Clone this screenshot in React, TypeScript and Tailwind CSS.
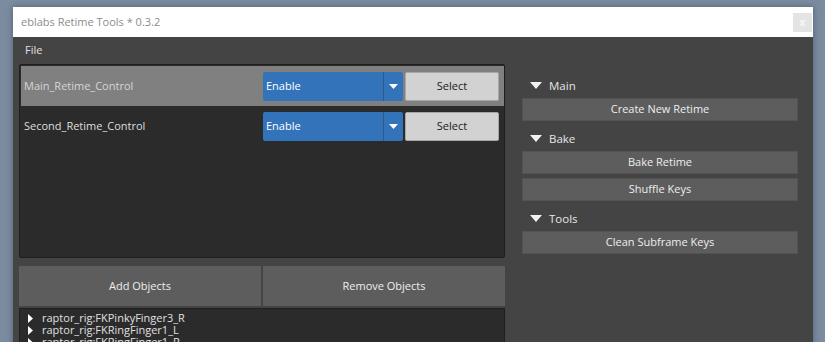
const font = { fontFamily: '"Open Sans", "Liberation Sans", sans-serif' };

const rows = [
  { name: "Main_Retime_Control", active: true },
  { name: "Second_Retime_Control", active: false },
];

const treeItems = [
  "raptor_rig:FKPinkyFinger3_R",
  "raptor_rig:FKRingFinger1_L",
  "raptor_rig:FKRingFinger1_R",
];

const Triangle = () => (
  <svg width="12" height="8" viewBox="0 0 12 8" className="shrink-0">
    <path d="M0 0 L12 0 L6 7 Z" fill="#f2f2f2" />
  </svg>
);

const SectionHeader = ({ title, first }: { title: string; first?: boolean }) => (
  <div className={`flex h-[24px] shrink-0 items-center gap-[7px] pl-[8px] ${first ? "" : "mt-[6px]"}`}>
    <Triangle />
    <span className="text-[11.5px] text-[#e6e6e6]">{title}</span>
  </div>
);

const ToolButton = ({ label, top }: { label: string; top?: boolean }) => (
  <button
    className={`flex h-[23px] w-full shrink-0 items-center justify-center border border-[#535353] bg-[#5d5d5d] text-[11px] text-[#eeeeee] ${top ? "mt-[4px]" : ""}`}
  >
    {label}
  </button>
);

const RetimeRow = ({ name, active }: { name: string; active: boolean }) => (
  <div className={`flex h-[40px] shrink-0 items-center pl-[3px] pr-[5px] ${active ? "bg-[#808080]" : ""}`}>
    <span className={`flex-1 text-[11px] ${active ? "text-[#d6d6d6]" : "text-[#dedede]"}`}>{name}</span>
    <div className="flex h-[29px] w-[140px] items-stretch rounded-[2px] bg-[#3273ba]">
      <span className="flex flex-1 items-center pl-[3px] text-[11px] text-white">Enable</span>
      <div className="w-[1px] bg-[#2a5b91]" />
      <div className="flex w-[19px] items-center justify-center">
        <svg width="9" height="5" viewBox="0 0 9 5">
          <path d="M0 0 L9 0 L4.5 5 Z" fill="#ffffff" />
        </svg>
      </div>
    </div>
    <button className="ml-[2px] flex h-[29px] w-[94px] items-center justify-center rounded-[2px] border border-[#a8a8a8] bg-[#d2d2d2] text-[11px] text-[#1a1a1a]">
      Select
    </button>
  </div>
);

const App = () => {
  return (
    <div className="flex h-[342px] w-[825px] overflow-hidden bg-[#7b8ca1] pt-[7px] pl-[13px]" style={font}>
      <div className="flex h-[400px] w-[800px] shrink-0 flex-col shadow-[0_0_6px_rgba(40,50,60,0.5)]">
        <div className="flex h-[30px] shrink-0 items-center justify-between bg-white pl-[8px] pr-[1px]">
          <span className="text-[11px] text-[#8c8c8c]">eblabs Retime Tools * 0.3.2</span>
          <div className="flex h-[19px] w-[19px] items-center justify-center bg-[#e4e4e4] text-[10px] font-bold text-[#f7f7f7]">
            x
          </div>
        </div>

        <div className="flex flex-1 flex-col bg-[#444444]">
          <div className="flex h-[27px] shrink-0 items-center pl-[12px] text-[11px] text-[#e0e0e0]">File</div>

          <div className="flex flex-1 pl-[6px] pr-[15px]">
            <section className="flex w-[486px] flex-col">
              <div className="flex h-[194px] shrink-0 flex-col rounded-[2px] border border-[#1f1f1f] bg-[#2b2b2b] pt-[1px] pl-[1px]">
                {rows.map((row) => (
                  <RetimeRow key={row.name} name={row.name} active={row.active} />
                ))}
              </div>

              <div className="mt-[8px] flex shrink-0 gap-[2px]">
                <button className="flex h-[40px] flex-1 items-center justify-center bg-[#5d5d5d] text-[11px] text-[#eeeeee]">
                  Add Objects
                </button>
                <button className="flex h-[40px] flex-1 items-center justify-center bg-[#5d5d5d] text-[11px] text-[#eeeeee]">
                  Remove Objects
                </button>
              </div>

              <div className="mt-[2px] flex flex-1 flex-col border border-[#1f1f1f] bg-[#2b2b2b] pt-[3px] pl-[8px]">
                {treeItems.map((item) => (
                  <div key={item} className="flex h-[12px] shrink-0 items-center gap-[9px]">
                    <svg width="5" height="9" viewBox="0 0 5 9" className="shrink-0">
                      <path d="M0 0 L5 4.5 L0 9 Z" fill="#ffffff" />
                    </svg>
                    <span className="text-[11px] leading-[12px] text-[#e0e0e0]">{item}</span>
                  </div>
                ))}
              </div>
            </section>

            <section className="ml-[17px] flex flex-1 flex-col pt-[10px]">
              <SectionHeader title="Main" first />
              <ToolButton label="Create New Retime" />
              <SectionHeader title="Bake" />
              <ToolButton label="Bake Retime" />
              <ToolButton label="Shuffle Keys" top />
              <SectionHeader title="Tools" />
              <ToolButton label="Clean Subframe Keys" />
            </section>
          </div>
        </div>
      </div>
    </div>
  );
};

export default App;
